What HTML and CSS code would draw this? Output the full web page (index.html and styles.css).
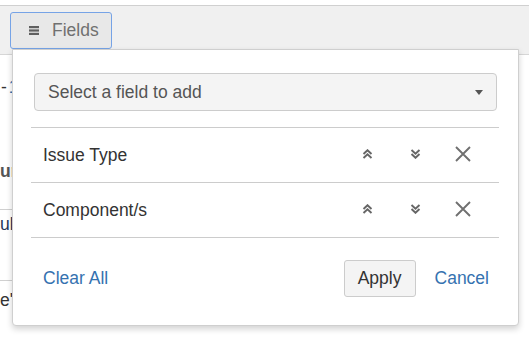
FILE: index.html
```html
<!DOCTYPE html>
<html lang="en">
<head>
<meta charset="utf-8">
<title>Fields</title>
<link rel="stylesheet" href="styles.css">
</head>
<body>
<div class="page">
  <div class="toolbar">
    <button class="fields-btn" type="button">
      <svg class="menu-icon" width="10" height="9" viewBox="0 0 10 9" aria-hidden="true">
        <rect x="0" y="0" width="10" height="2.2"/>
        <rect x="0" y="3.4" width="10" height="2.2"/>
        <rect x="0" y="6.8" width="10" height="2.2"/>
      </svg>
      <span>Fields</span>
    </button>
  </div>

  <div class="bg-table">
    <div class="bg-row bg-row-a"><span class="bg-text dash">-<span class="blue">1</span></span></div>
    <div class="bg-row bg-row-b"><span class="bg-text bold">ur</span></div>
    <div class="bg-row bg-row-c"><span class="bg-text navy">ul</span></div>
    <div class="bg-row bg-row-d"><span class="bg-text">e'</span></div>
  </div>

  <div class="popup">
    <div class="select">
      <span class="select-label">Select a field to add</span>
      <span class="caret"></span>
    </div>

    <ul class="field-list">
      <li class="field-row">
        <span class="field-name">Issue Type</span>
        <span class="field-actions">
          <button class="icon-btn" type="button" aria-label="Move up">
            <svg width="11" height="10" viewBox="0 0 11 10"><path d="M1.5 5 L5.5 1.2 L9.5 5 M1.5 9 L5.5 5.2 L9.5 9"/></svg>
          </button>
          <button class="icon-btn" type="button" aria-label="Move down">
            <svg width="11" height="10" viewBox="0 0 11 10"><path d="M1.5 1 L5.5 4.8 L9.5 1 M1.5 5 L5.5 8.8 L9.5 5"/></svg>
          </button>
          <button class="icon-btn" type="button" aria-label="Remove">
            <svg class="x-icon" width="16" height="16" viewBox="0 0 16 16"><path d="M1 1 L15 15 M15 1 L1 15"/></svg>
          </button>
        </span>
      </li>
      <li class="field-row">
        <span class="field-name">Component/s</span>
        <span class="field-actions">
          <button class="icon-btn" type="button" aria-label="Move up">
            <svg width="11" height="10" viewBox="0 0 11 10"><path d="M1.5 5 L5.5 1.2 L9.5 5 M1.5 9 L5.5 5.2 L9.5 9"/></svg>
          </button>
          <button class="icon-btn" type="button" aria-label="Move down">
            <svg width="11" height="10" viewBox="0 0 11 10"><path d="M1.5 1 L5.5 4.8 L9.5 1 M1.5 5 L5.5 8.8 L9.5 5"/></svg>
          </button>
          <button class="icon-btn" type="button" aria-label="Remove">
            <svg class="x-icon" width="16" height="16" viewBox="0 0 16 16"><path d="M1 1 L15 15 M15 1 L1 15"/></svg>
          </button>
        </span>
      </li>
    </ul>

    <div class="footer">
      <a class="link" href="#">Clear All</a>
      <span class="footer-right">
        <button class="apply-btn" type="button">Apply</button>
        <a class="link" href="#">Cancel</a>
      </span>
    </div>
  </div>
</div>
</body>
</html>
```

FILE: styles.css
```css
* { box-sizing: border-box; }

html, body {
  margin: 0;
  padding: 0;
  background: #fff;
  font-family: "Liberation Sans", Arial, sans-serif;
  font-size: 17.5px;
  color: #333;
}

.page {
  position: relative;
  width: 529px;
  height: 342px;
  overflow: hidden;
}

.toolbar {
  margin-top: 5px;
  height: 50px;
  background: #f0f0f0;
  border-top: 1px solid #d0d0d0;
  border-bottom: 1px solid #d6d6d6;
  padding: 6px 0 0 10px;
}

.fields-btn {
  display: flex;
  align-items: center;
  gap: 13px;
  width: 102px;
  height: 37px;
  padding: 0 0 0 18px;
  background: #e8e8e8;
  border: 1px solid #76a3e6;
  border-radius: 3px;
  font-family: inherit;
  font-size: 17.5px;
  color: #707070;
  cursor: pointer;
}

.menu-icon { fill: #5f5f5f; flex: none; }

/* background table, mostly covered by the popup */
.bg-table {
  width: 60px;
}

.bg-row {
  white-space: nowrap;
  line-height: 24px;
}

.bg-row-a { height: 64px; padding-top: 20px; }
.bg-row-b { height: 91px; padding-top: 40px; border-bottom: 1px solid #d0d0d0; }
.bg-row-c { height: 71px; padding-top: 2px; border-bottom: 1px solid #d0d0d0; }
.bg-row-d { padding-top: 7px; }

.bg-text { display: inline-block; }
.dash { margin-left: 1px; color: #333; }
.dash .blue { margin-left: 2px; color: #3572b0; }
.bold { font-weight: bold; color: #555; }
.navy { color: #243659; }
.bg-row-d .bg-text { color: #333; }

/* popup */
.popup {
  position: absolute;
  left: 12px;
  top: 49px;
  width: 507px;
  height: 277px;
  background: #fff;
  border: 1px solid #cfcfcf;
  border-radius: 0 0 4px 4px;
  box-shadow: 0 3px 6px rgba(0, 0, 0, 0.18);
  padding: 23px 19px 0 18px;
}

.select {
  display: flex;
  align-items: center;
  justify-content: space-between;
  height: 38px;
  margin: 0 2px 0 3px;
  padding: 0 13px 0 13px;
  background: #f4f4f4;
  border: 1px solid #cccccc;
  border-radius: 4px;
  color: #555;
}

.caret {
  width: 0;
  height: 0;
  border-left: 4.5px solid transparent;
  border-right: 4.5px solid transparent;
  border-top: 5px solid #555;
}

.field-list {
  list-style: none;
  margin: 16px 0 0 0;
  padding: 0;
  border-top: 1px solid #cccccc;
}

.field-row {
  display: flex;
  align-items: center;
  justify-content: space-between;
  height: 55px;
  padding: 0 12px;
  border-bottom: 1px solid #cccccc;
}

.field-name { color: #333; }

.field-actions {
  display: flex;
  align-items: center;
  margin-bottom: 3px;
}

.icon-btn {
  display: flex;
  align-items: center;
  justify-content: center;
  width: 48px;
  height: 24px;
  padding: 0;
  border: 0;
  background: none;
  cursor: pointer;
}

.icon-btn svg path {
  fill: none;
  stroke: #666;
  stroke-width: 1.9;
}

.icon-btn .x-icon path {
  stroke: #707070;
  stroke-width: 1.9;
}

.footer {
  display: flex;
  align-items: center;
  justify-content: space-between;
  padding: 22px 10px 0 12px;
}

.footer-right {
  display: flex;
  align-items: center;
  gap: 19px;
}

.link {
  color: #3572b0;
  text-decoration: none;
}

.apply-btn {
  width: 72px;
  height: 37px;
  padding: 0;
  background: #f4f4f4;
  border: 1px solid #cccccc;
  border-radius: 3px;
  font-family: inherit;
  font-size: 17.5px;
  color: #333;
  cursor: pointer;
}
```
